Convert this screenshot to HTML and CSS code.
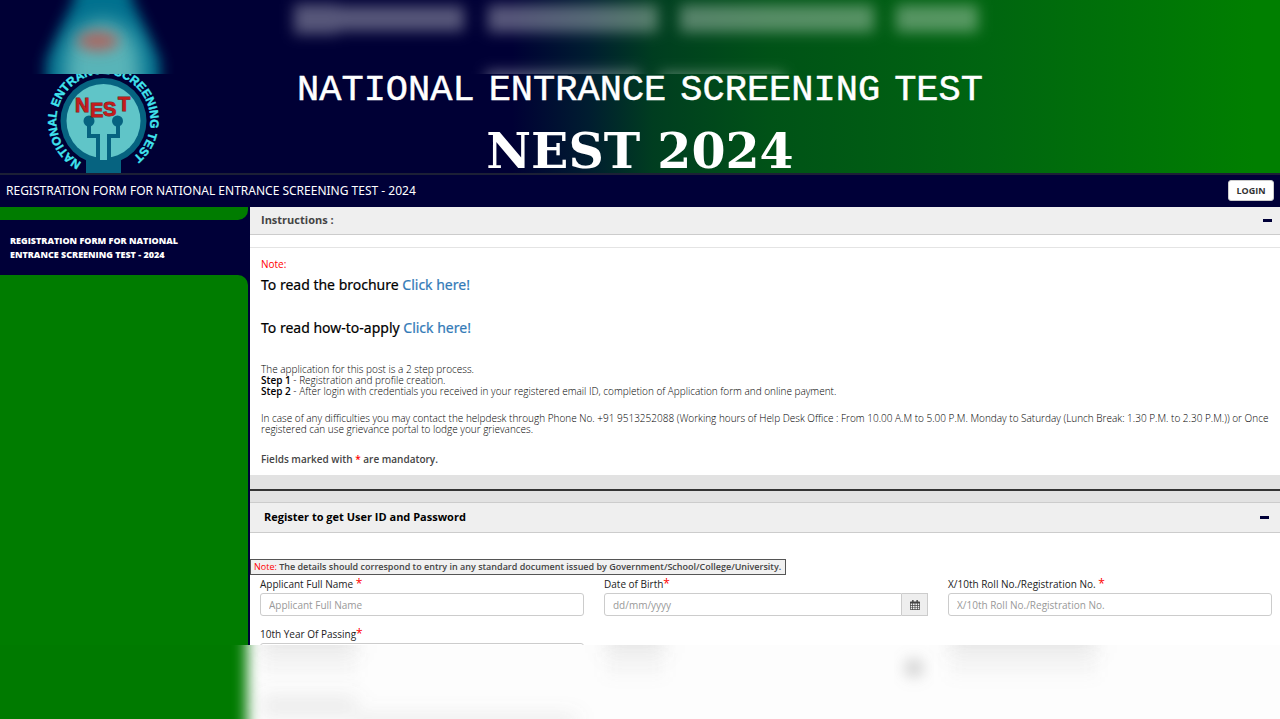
FILE: index.html
```html
<!DOCTYPE html>
<html lang="en">
<head>
<meta charset="utf-8">
<title>National Entrance Screening Test - 2024</title>
<link rel="stylesheet" href="styles.css">
</head>
<body>
<div class="haze haze-top" aria-hidden="true">
  <svg class="haze-art" viewBox="0 0 1280 74" preserveAspectRatio="none">
    <defs>
      <filter id="soft" x="-50%" y="-100%" width="200%" height="300%"><feGaussianBlur stdDeviation="7"/></filter>
      <filter id="soft2" x="-50%" y="-100%" width="200%" height="300%"><feGaussianBlur stdDeviation="10"/></filter>
    </defs>
    <path d="M78 -30h50l4 30 28 60v50H46V60L74 0z" fill="#00708e" filter="url(#soft)"/>
    <path d="M65 110V60q5-36 38-40 33 4 38 40v50z" fill="#58b4b8" filter="url(#soft2)"/>
    <ellipse cx="98" cy="41" rx="21" ry="10" fill="#bd5550" fill-opacity=".8" filter="url(#soft)"/>
    <g fill="#fff" fill-opacity=".34" filter="url(#soft)">
      <rect x="294" y="4" width="44" height="30"/><rect x="338" y="6" width="126" height="25"/>
      <rect x="488" y="5" width="170" height="27"/>
      <rect x="680" y="5" width="194" height="27"/>
      <rect x="896" y="5" width="82" height="27"/>
      <rect x="486" y="71" width="154" height="20"/><rect x="660" y="73" width="124" height="20"/>
    </g>
  </svg>
</div>

<div class="app">
  <header class="banner">
    <svg class="logo" viewBox="0 0 120 100" role="img" aria-label="NEST logo">
      <defs><path id="ring" d="M38.500 88.500A47 47 0 1 1 86.500 86"/></defs>
      <circle cx="60.500" cy="47" r="43" fill="#066380"/>
      <path d="M43 84h35v15H43z" fill="#066380"/>
      <circle cx="60.500" cy="47" r="37" fill="#60c5c8"/>
      <g fill="none" stroke="#066380" stroke-width="4"><path d="M46 48v14h9v25M75 48v14h-9v25"/></g>
      <circle cx="46" cy="47" r="5.500" fill="#066380"/><circle cx="74.500" cy="47" r="5.500" fill="#066380"/>
      <path d="M57 60h7v26h-7z" fill="#60c5c8"/>
      <text class="ring-text"><textPath href="#ring">NATIONAL ENTRANCE SCREENING TEST</textPath></text>
      <g class="logo-name"><text x="32" y="38">N</text><text x="47" y="43">E</text><text x="60" y="42">S</text><text x="75" y="37">T</text></g>
    </svg>
    <div class="titles">
      <h1 class="title"><span>NATIONAL</span> <span>ENTRANCE</span> <span>SCREENING</span> <span>TEST</span></h1>
      <p class="edition">NEST 2024</p>
    </div>
  </header>

  <nav class="bar">
    <span class="bar-title">REGISTRATION FORM FOR NATIONAL ENTRANCE SCREENING TEST - 2024</span>
    <button class="login" type="button">LOGIN</button>
  </nav>

  <div class="columns">
    <aside class="side">
      <div class="side-top"></div>
      <a class="side-item" href="#register">REGISTRATION FORM FOR NATIONAL ENTRANCE SCREENING TEST - 2024</a>
      <div class="side-rest"></div>
    </aside>

    <main class="main">
      <section class="instructions">
        <div class="panel-head">
          <h2 class="panel-title">Instructions :</h2>
          <button class="toggle" type="button" aria-label="Collapse instructions"></button>
        </div>
        <div class="panel-body">
          <p class="note">Note:</p>
          <p class="lead">To read the brochure <a href="#brochure">Click here!</a></p>
          <p class="lead">To read how-to-apply <a href="#apply">Click here!</a></p>
          <p class="para">The application for this post is a 2 step process.<br><b>Step 1</b> - Registration and profile creation.<br><b>Step 2</b> - After login with credentials you received in your registered email ID, completion of Application form and online payment.</p>
          <p class="para">In case of any difficulties you may contact the helpdesk through Phone No. +91 9513252088 (Working hours of Help Desk Office : From 10.00 A.M to 5.00 P.M. Monday to Saturday (Lunch Break: 1.30 P.M. to 2.30 P.M.)) or Once registered can use grievance portal to lodge your grievances.</p>
          <p class="mandatory">Fields marked with <span class="req">*</span> are mandatory.</p>
        </div>
      </section>
      <hr class="divider">
      <section class="register" id="register">
        <div class="panel-head register-head">
          <h2 class="panel-title">Register to get User ID and Password</h2>
          <button class="toggle" type="button" aria-label="Collapse registration"></button>
        </div>
        <form class="form">
          <p class="form-note"><span class="red">Note:</span> The details should correspond to entry in any standard document issued by Government/School/College/University.</p>
          <div class="fields">
            <div class="field">
              <label for="name">Applicant Full Name <span class="star">*</span></label>
              <input class="input" id="name" type="text" placeholder="Applicant Full Name">
            </div>
            <div class="field">
              <label for="dob">Date of Birth<span class="star">*</span></label>
              <div class="group">
                <input class="input" id="dob" type="text" placeholder="dd/mm/yyyy">
                <button class="calendar" type="button" aria-label="Choose date">
                  <svg viewBox="0 0 14 14" width="10" height="10"><path fill="#444" d="M3 0h2v2h4V0h2v2h2q1 0 1 1v10q0 1-1 1H1q-1 0-1-1V3q0-1 1-1h2z"/><path fill="#eee" d="M1 5h2v2H1zM4 5h2.500v2H4zM7.500 5H10v2H7.500zM11 5h2v2h-2zM1 8h2v2H1zM4 8h2.500v2H4zM7.500 8H10v2H7.500zM11 8h2v2h-2zM1 11h2v2H1zM4 11h2.500v2H4zM7.500 11H10v2H7.500zM11 11h2v2h-2z"/></svg>
                </button>
              </div>
            </div>
            <div class="field">
              <label for="roll">X/10th Roll No./Registration No. <span class="star">*</span></label>
              <input class="input" id="roll" type="text" placeholder="X/10th Roll No./Registration No.">
            </div>
            <div class="field">
              <label for="year">10th Year Of Passing<span class="star">*</span></label>
              <input class="input" id="year" type="text">
            </div>
          </div>
        </form>
      </section>
    </main>
  </div>
</div>

<div class="haze haze-bottom" aria-hidden="true">
  <svg class="haze-art" viewBox="0 0 1280 74" preserveAspectRatio="none">
    <path d="M-30 -30H247V110H-30z" fill="#007a00" filter="url(#soft)"/>
    <g fill="#777" fill-opacity=".2" filter="url(#soft2)">
      <rect x="262" y="-12" width="94" height="20"/><rect x="262" y="54" width="94" height="14"/>
      <rect x="606" y="-12" width="58" height="20"/><rect x="950" y="-12" width="146" height="20"/>
      <rect x="356" y="72" width="220" height="10"/>
    </g>
    <ellipse cx="914" cy="23" rx="10" ry="10" fill="#999" fill-opacity=".4" filter="url(#soft)"/>
    <path d="M262 12h94v20h-94zM606 12h58v20h-58zM950 12h146v20H950z" fill="#999" fill-opacity=".06" filter="url(#soft)"/>
  </svg>
</div>
</body>
</html>
```

FILE: styles.css
```css
* { box-sizing: border-box; }
body {
  margin: 0;
  height: 100vh;
  display: flex;
  flex-direction: column;
  overflow: hidden;
  font-family: "Open Sans", "Noto Sans", sans-serif;
  font-size: 10px;
  color: #444;
  background: #fff;
}
h1, h2, p { margin: 0; }
button { font-family: inherit; }

.haze { flex: 0 0 74px; overflow: hidden; }
.haze-top, .banner {
  background: linear-gradient(90deg, #000035 0%, #000035 40%, #001d30 46%, #003d20 51%, #005217 60%, #006510 77%, #007f00 98%);
}
.haze-bottom { background: #fdfdfd; }
.haze-art { display: block; width: 100%; height: 100%; }

.app { flex: 1; min-height: 0; display: flex; flex-direction: column; overflow: hidden; }

.banner {
  flex: 0 0 auto;
  display: flex;
  position: relative;
  justify-content: center;
}
.logo { position: absolute; left: 43px; top: 0; width: 120px; height: 100px; }
.ring-text { font: bold 12px "Liberation Sans", sans-serif; fill: #41e5ef; stroke: #41e5ef; stroke-width: 0.4px; }
.logo-name { font: bold 20px "Liberation Sans", sans-serif; fill: #c41c1c; stroke: #7b1c25; stroke-width: 1px; paint-order: stroke; }
.titles { display: flex; flex-direction: column; align-items: center; color: #fff; }
.title {
  display: flex;
  gap: 14px;
  font: 37px/32px "Liberation Mono", monospace;
  -webkit-text-stroke: 0.5px #fff;
}
.edition { font: bold 49px/44px "DejaVu Serif", serif; padding-top: 23px; white-space: nowrap; }

.bar {
  flex: 0 0 34px;
  display: flex;
  align-items: center;
  justify-content: space-between;
  padding: 0 6px 2px;
  background: #000038;
  border-top: 2px solid #1c2036;
  color: #fff;
}
.bar-title { font-family: "Noto Sans", sans-serif; font-size: 12px; }
.login {
  width: 46px;
  height: 21px;
  padding: 0;
  border: 1px solid #ccc;
  border-radius: 3px;
  background: #fff;
  color: #333;
  font-size: 9px;
  font-weight: 700;
}

.columns { flex: 1; min-height: 0; display: flex; }
.side {
  flex: 0 0 250px;
  display: flex;
  flex-direction: column;
  padding-right: 2px;
  background: #000038;
}
.side-top { height: 13px; background: #007c00; border-bottom-right-radius: 10px; }
.side-rest { flex: 1; background: #007c00; border-top-right-radius: 10px; }
.side-item {
  padding: 14px 40px 13px 10px;
  font-size: 9px;
  line-height: 14px;
  font-weight: 800;
  color: #fff;
  text-decoration: none;
}

.main { flex: 1; min-width: 0; overflow: hidden; }
.panel-head {
  display: flex;
  align-items: center;
  justify-content: space-between;
  height: 28px;
  padding: 0 8px 0 11px;
  background: #efefef;
  border-bottom: 1px solid #ccc;
}
.panel-title { font-size: 11px; font-weight: 700; line-height: 16px; padding-bottom: 1px; color: #444; }
.toggle { width: 9px; height: 3px; padding: 0; border: 0; background: #000038; }
.panel-body { margin-top: 12px; padding: 9px 11px; border-top: 1px solid #e4e4e4; }
.note { line-height: 14px; color: #f00; }
.red, .req { color: #f00; }
.lead { font-family: "Noto Sans", sans-serif; font-size: 14px; line-height: 19px; padding: 4px 0 20px; color: #000; -webkit-text-stroke: 0.2px; }
.lead a { color: #337ab7; text-decoration: none; }
.para { line-height: 11px; padding: 7px 0 9px; font-weight: 300; color: #000; }
.para b { font-weight: 600; }
.mandatory { line-height: 14px; padding: 8px 0 0; font-weight: 600; }

.divider { height: 27px; margin: 0; border: 0; background: linear-gradient(#e2e2e2 14px, #333 14px, #333 16px, #e2e2e2 16px); }
.register-head { height: 31px; padding: 0 11px 0 14px; border-top: 1px solid #ccc; }
.register-head .panel-title { color: #000; }
.form { padding-top: 26px; }
.form-note {
  width: fit-content;
  padding: 0 4px 0 3px;
  border: 1px solid #555;
  background: #f1f1f1;
  line-height: 14px;
  font-size: 9px;
  font-weight: 600;
}
.form-note .red { font-weight: 400; }
.fields { display: grid; grid-template-columns: repeat(3, 1fr); gap: 9px 20px; padding: 0 8px 0 10px; }
.field { display: flex; flex-direction: column; }
.field label { line-height: 18px; color: #222; }
.star { color: #f00; font-size: 12px; line-height: 10px; }
.input {
  width: 100%;
  height: 23px;
  padding: 0 8px;
  border: 1px solid #ccc;
  border-radius: 3px;
  background: #fff;
  font-family: inherit;
  font-size: 10px;
}
.input::placeholder { color: #999; }
.group { display: flex; }
.group .input { flex: 1; min-width: 0; border-radius: 3px 0 0 3px; }
.calendar {
  flex: 0 0 26px;
  display: flex;
  align-items: center;
  justify-content: center;
  padding: 0;
  border: 1px solid #ccc;
  border-left: 0;
  background: #eee;
}
```
